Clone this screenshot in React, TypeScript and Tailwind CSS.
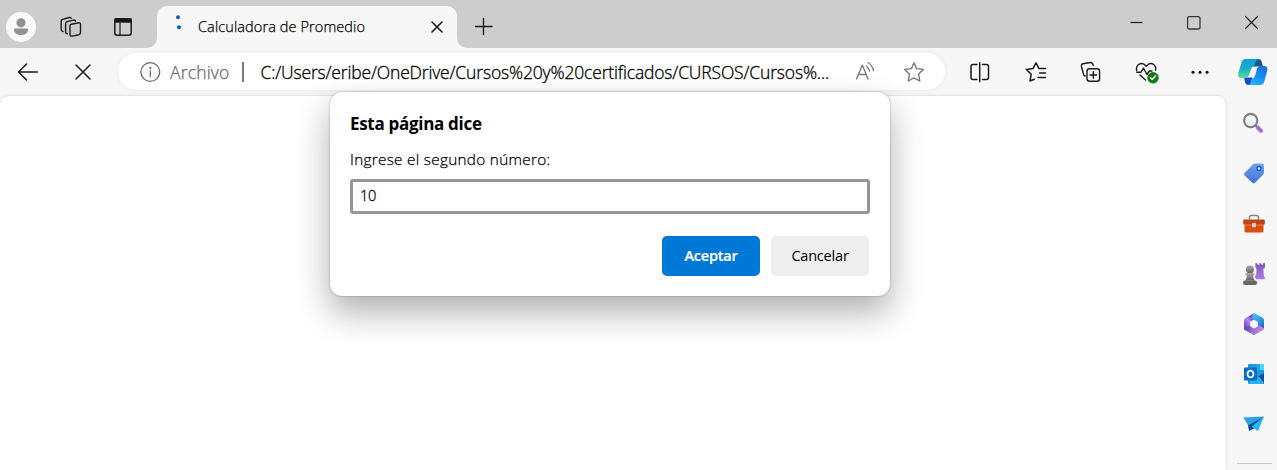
import type { ReactNode } from "react";

function Ico({ w = 24, h = 24, sw = 1.4, color = "#1b1b1b", className = "", children }: { w?: number; h?: number; sw?: number; color?: string; className?: string; children: ReactNode }) {
  return (
    <svg width={w} height={h} viewBox={`0 0 ${w} ${h}`} fill="none" stroke={color} strokeWidth={sw} strokeLinecap="round" strokeLinejoin="round" className={`shrink-0 ${className}`}>
      {children}
    </svg>
  );
}

const STAR = "M12 2.8 L14.6 8.6 L21.3 9.4 L16.6 14 L17.7 21 L12 17.9 L6.3 21 L7.4 14 L2.7 9.4 L9.4 8.6 Z";

function TabStrip() {
  return (
    <div className="flex h-12 items-end bg-[#cdcdcd]">
      <div className="ml-[6px] flex h-[42px] w-[30px] shrink-0 items-center">
        <svg width="30" height="30" viewBox="0 0 30 30">
          <circle cx="15" cy="15" r="15" fill="#f9f9f9" />
          <circle cx="15" cy="10.8" r="4.6" fill="#919191" />
          <path d="M8.8 16.500h12.4q1 0 .9 1.200Q21.500 23 15 23T7.900 17.700Q7.800 16.500 8.800 16.500Z" fill="#919191" />
        </svg>
      </div>
      <div className="ml-[23px] flex h-[42px] w-[88px] shrink-0 items-center justify-between pr-3">
        <Ico>
          <path d="M12.300 9.200 19.800 7.800Q21.500 7.600 21.500 9.200V17.300Q21.500 19.200 20 19.700L13 21.100Q11 21.300 11 19.600V11Q11 9.500 12.300 9.200Z" />
          <path d="M8.300 18.800Q6.600 18.600 6.600 17V8.500Q6.600 7 8 6.600L14.500 5.100Q16 4.900 16.500 6" />
          <path d="M4 16.500Q2.200 16.200 2.200 14.500V6Q2.200 4.700 3.600 4.300L10.200 2.500Q11.600 2.300 12.200 3.200" />
        </Ico>
        <Ico sw={1.5}>
          <rect x="3.800" y="3.800" width="16.400" height="16.400" rx="2.500" />
          <path d="M4 4h16v3H4z" fill="#111" />
          <path d="M9 8v12" strokeWidth="1.200" />
        </Ico>
      </div>
      <svg width="10" height="10" className="shrink-0"><path d="M10 0A10 10 0 0 1 0 10H10Z" fill="#f7f7f7" /></svg>
      <div className="flex h-[42px] w-[300px] shrink-0 items-center rounded-t-[10px] bg-[#f7f7f7]">
        <svg width="41" height="42" className="shrink-0">
          <circle cx="21" cy="11.300" r="2" fill="#0a62b0" />
          <circle cx="22" cy="21.300" r="2" fill="#0a62b0" />
        </svg>
        <span className="w-[232px] whitespace-nowrap text-[14.500px] font-light leading-5 tracking-[0.100px] text-black [-webkit-text-stroke:0.25px_#000]">Calculadora de Promedio</span>
        <Ico w={14} h={14} sw={1.600}><path d="M2 2 12 12M12 2 2 12" /></Ico>
      </div>
      <svg width="10" height="10" className="shrink-0"><path d="M0 0A10 10 0 0 0 10 10H0Z" fill="#f7f7f7" /></svg>
      <div className="ml-[5px] flex h-[42px] items-center">
        <Ico sw={1.400}><path d="M3.500 11.500H20M11.500 3.500V19.500" /></Ico>
      </div>
      <div className="ml-auto flex h-12 w-[151px] items-start pt-[15px]">
        <Ico w={58} h={16} sw={1.200}><path d="M4.500 7.500H16.500" strokeLinecap="butt" /></Ico>
        <Ico w={58} h={16} sw={1.300} color="#383838"><rect x="3.600" y="1.600" width="12.400" height="12.400" rx="1.500" /></Ico>
        <Ico w={34} h={16} sw={1.200}><path d="M3.500 1.500 15.500 13.500M15.500 1.500 3.500 13.500" /></Ico>
      </div>
    </div>
  );
}

function Copilot() {
  return (
    <svg width="32" height="28" viewBox="0 0 32 28" className="shrink-0">
      <defs>
        <linearGradient id="ca" x1="0.200" y1="0" x2="0.100" y2="1"><stop offset="0" stopColor="#10a0dc" /><stop offset="0.500" stopColor="#1aadc8" /><stop offset="1" stopColor="#62dca0" /></linearGradient>
        <linearGradient id="cb" x1="1" y1="0" x2="0.400" y2="1"><stop offset="0" stopColor="#2264d8" /><stop offset="0.600" stopColor="#168df5" /><stop offset="1" stopColor="#1bb2fc" /></linearGradient>
      </defs>
      <path d="M18 1h3.500q2.300 0 3 2.300L26 8.500H16.500Z" fill="#135b89" />
      <path d="M13 27h-2q-2.200-.2-2.800-2.500L7 19.500h8.300L14 25Z" fill="#1748d4" />
      <path d="M8.500 1H22q-2.800.6-3.800 3.500L17 8.500q-2.300.3-3 2.500L12 17q-1 3-4 3H4.500Q.300 20 1.200 15.500L4.500 4.500Q5.500 1 8.500 1Z" fill="url(#ca)" />
      <path d="M26.800 8q4.500 0 3.500 4.500L27.300 23.500q-1 3.500-4.500 3.500H11q2.700-.5 3.500-3.500l.8-3.200q2-.3 2.800-2.500L20 11q.9-3 3.700-3z" fill="url(#cb)" />
    </svg>
  );
}

function Toolbar() {
  return (
    <div className="flex h-12 items-center bg-[#f7f7f7] pb-px">
      <Ico className="ml-4" sw={1.600}><path d="M2.500 12H21.500M10.500 4 2.500 12l8 8" /></Ico>
      <Ico className="ml-[31px]" sw={1.500}><path d="M5 5 19 19M19 5 5 19" /></Ico>
      <div className="ml-[23px] flex h-[37px] w-[827px] shrink-0 items-center rounded-full bg-white pl-[20px] shadow-[0_0_5px_rgba(0,0,0,0.06)]">
        <Ico color="#6c6c6c" sw={1.300}>
          <circle cx="12.300" cy="12" r="9.400" /><path d="M12.300 11V16.500" /><circle cx="12.300" cy="7.800" r=".5" fill="#6c6c6c" />
        </Ico>
        <span className="ml-2 w-[72px] whitespace-nowrap text-[17.500px] font-light leading-6 tracking-[0.180px] text-[#666] [-webkit-text-stroke:0.25px_#666]">Archivo</span>
        <span className="h-5 w-[1.500px] bg-[#777]" />
        <span className="ml-[17px] w-[594px] whitespace-nowrap text-[17.500px] font-light leading-6 tracking-[-0.160px] text-black [-webkit-text-stroke:0.3px_#000]">C:/Users/eribe/OneDrive/Cursos%20y%20certificados/CURSOS/Cursos%...</span>
        <Ico color="#777" sw={1.300}>
          <path d="M1.500 19 7.300 5 13 19M3.500 14.500H11M11.500 6.200Q14 8 14.500 11.200M13 2.500Q17.500 5.500 18.500 10.500" />
        </Ico>
        <Ico className="ml-[23px]" color="#777"><path d={STAR} /></Ico>
      </div>
      <Ico className="ml-[23px]" sw={1.500}>
        <path d="M9 4.500H5q-2 0-2 2v11q0 2 2 2h4M14.500 4.500h4q2 0 2 2v11q0 2-2 2h-4" /><path d="M11.700 2.800V21.500" />
      </Ico>
      <Ico className="ml-8" sw={1.500}>
        <path d="M10.300 19.200 6 21 7.200 14.200 2.200 9.400 9 8.600 12 2.800 15 8.600H21.500M15.500 13h6M14 17.500h7.500" />
      </Ico>
      <Ico className="ml-[31px]" sw={1.400}>
        <rect x="8" y="8.800" width="12.600" height="12.400" rx="2.500" /><path d="M14.300 11.800v6.500M11 15h6.500M6.200 16Q4.500 15.500 4.300 13.500L2.500 6.500Q2 4.300 4 3.700L11.500 2.500Q13.500 2.300 14.300 5.500" />
      </Ico>
      <Ico className="ml-8" w={26} sw={1.400}>
        <path d="M1.700 10.500Q.8 6.700 3.600 4.500Q7.600 2 11.200 6.200Q15 2 18.700 4.500Q21.500 6.800 20.500 10.200M1.800 12.200H6L8.500 8.200 12 14.500 14.300 11H17M5 15 10.500 20" />
        <circle cx="18" cy="17.700" r="5.700" fill="#107c10" stroke="none" /><path d="m15.400 17.700 1.800 1.700 3.400-3.400" stroke="#fff" />
      </Ico>
      <Ico className="ml-[27px]"><g fill="#111" stroke="none"><circle cx="5" cy="12.300" r="1.500" /><circle cx="12" cy="12.300" r="1.500" /><circle cx="19" cy="12.300" r="1.500" /></g></Ico>
      <div className="ml-[25px]"><Copilot /></div>
    </div>
  );
}

function Side({ children }: { children: ReactNode }) {
  return <svg width="24" height="24" viewBox="0 0 24 24" className="shrink-0">{children}</svg>;
}

function Sidebar() {
  return (
    <aside className="flex w-[51px] shrink-0 flex-col items-center gap-[26.200px] pl-[5px] pt-[15px]">
      <Side>
        <circle cx="8.700" cy="9.500" r="6.600" fill="#f0f5f8" stroke="#808080" strokeWidth="2.200" />
        <path d="m13.500 14.300 2.200 2.200" stroke="#777" strokeWidth="2" /><path d="m15.800 16.600 3.200 3.200" stroke="#a56bd6" strokeWidth="4" strokeLinecap="round" />
      </Side>
      <Side>
        <defs><linearGradient id="tg" x1="0" y1="0" x2="0" y2="1"><stop stopColor="#6ca5f6" /><stop offset="1" stopColor="#456fd3" /></linearGradient></defs>
        <path d="M13 2.500h7q2 0 2 2v7.300q0 1-1 2L13 21.800q-1.300 1.200-2.600 0L2.500 14.500q-1-1.300 0-2.600L11 3.300Q12 2.500 13 2.500Z" fill="url(#tg)" />
        <circle cx="17" cy="7.500" r="2" fill="#e8f2ff" stroke="#2453a9" strokeWidth="1.300" />
      </Side>
      <Side>
        <g transform="translate(0 1.500)">
          <path d="M7.500 7V5q0-2 2-2h5q2 0 2 2v2" fill="none" stroke="#858585" strokeWidth="1.500" />
          <path d="M2.500 11h19v7.500q0 1.500-1.500 1.500H4q-1.500 0-1.500-1.500z" fill="#d94e16" />
          <rect x="1.200" y="7" width="21.600" height="5" rx="1" fill="#c2410f" /><path d="M2.500 12h19v1h-19z" fill="#f17b3d" /><rect x="10" y="10.300" width="4" height="4.500" rx="1" fill="#c9cdd0" />
        </g>
      </Side>
      <Side>
        <defs><linearGradient id="pg" x1="0" y1="0" x2="0" y2="1"><stop stopColor="#aaa" /><stop offset="1" stopColor="#626262" /></linearGradient><linearGradient id="rg" x1="0" y1="0" x2="0" y2="1"><stop stopColor="#8254b8" /><stop offset="1" stopColor="#ad7ce0" /></linearGradient></defs>
        <path d="M13.500 1.200h2v1.500h1.800V1.200h2v1.500h1.600V1.200H23v4.200l-1.700 1.500.6 7 .9 1v2.300H14l-1.200-3 1.400-1.500.4-5.800-1.200-1.500z" fill="url(#rg)" />
        <circle cx="8" cy="7.500" r="4" fill="url(#pg)" /><path d="M4.500 11h7q1 0 1 1.200t-1 1.300H11q.3 3.500 2.200 5H2.800Q4.700 17 5 13.500h-.5q-1 0-1-1.300t1-1.200Z" fill="url(#pg)" /><rect x="1" y="18.500" width="14" height="4.500" rx="2" fill="#666" />
      </Side>
      <Side>
        <defs>
          <linearGradient id="ma" x1="0" y1="1" x2="0.700" y2="0"><stop stopColor="#5d3bb5" /><stop offset="0.550" stopColor="#b284ee" /><stop offset="1" stopColor="#5b3fb0" /></linearGradient>
          <linearGradient id="mb" x1="0" y1="0" x2="0.600" y2="1"><stop stopColor="#4dc9ee" /><stop offset="0.600" stopColor="#2f9be4" /><stop offset="1" stopColor="#2868c4" /></linearGradient>
          <linearGradient id="mc" x1="0" y1="0" x2="1" y2="0.300"><stop stopColor="#37369a" /><stop offset="0.500" stopColor="#9a6ace" /><stop offset="1" stopColor="#c48de6" /></linearGradient>
        </defs>
        <path d="M11 1.800 3.200 6.300Q2 7.200 2 9v8L8.500 14.500V9.800L13 7V1.500Q12 1.200 11 1.800Z" fill="url(#ma)" />
        <path d="M10.500 2.300Q12 .8 14 2l7 4q1 .8 1 2.300v8.500L16 14V10.300L10.500 7Z" fill="url(#mb)" />
        <path d="M2 16.500q0 1 1.200 1.700L11 22.700q1 .6 2 0l7.800-4.500q1.200-.7 1.200-2L16.500 13 12 16 8.500 13.500Z" fill="url(#mc)" />
        <path d="m12 8 3.700 2.100v4.300L12 16.500l-3.700-2.100v-4.300z" fill="#f7f7f7" />
      </Side>
      <Side>
        <rect x="6" y="2" width="16" height="14" rx="1" fill="#189de5" /><path d="M14 2h8v6h-8z" fill="#50d3ff" /><path d="M14 2h4v6h-4z" fill="#28a8ea" /><path d="m6 12 8 4 8-5v9.500q0 1.300-1.300 1.300H6z" fill="#1490df" /><path d="m22 11-10 6 10 5z" fill="#114f96" /><path d="m6 21 11-6.500 5 6.500-1 .8H6z" fill="#24b1ef" />
        <rect x="2" y="5.500" width="13" height="13" rx="1" fill="#0a6cc8" /><ellipse cx="8.500" cy="12" rx="3" ry="3.400" fill="none" stroke="#fff" strokeWidth="1.800" />
      </Side>
      <Side>
        <path d="M1.300 5.500 22 4.500 6 13Z" fill="#2ba2e8" /><path d="M6 13 22 4.500 7 19z" fill="#0c4f95" /><path d="M7 19 11 14l4 1Z" fill="#083b76" /><path d="M22 4.500 16 19.300 9.500 14.700Z" fill="#2bb5f4" />
      </Side>
      <div className="mt-px h-px w-[35px] shrink-0 bg-[#c8c8c8]" />
    </aside>
  );
}

function PromptDialog() {
  return (
    <div role="dialog" className="absolute left-[330px] top-[92px] flex h-[204px] w-[560px] flex-col rounded-xl bg-white px-5 shadow-[0_0_2px_rgba(0,0,0,0.35),0_16px_34px_rgba(0,0,0,0.32)]">
      <h1 className="mt-5 whitespace-nowrap text-[17px] font-bold leading-6 tracking-[-0.300px] text-black">Esta página dice</h1>
      <p className="mt-[11px] whitespace-nowrap text-[15.300px] font-light leading-6 tracking-[0.300px] text-black [-webkit-text-stroke:0.25px_#000]">Ingrese el segundo número:</p>
      <div className="mt-2 flex h-[35px] shrink-0 items-center rounded-[3px] border-[3px] border-[#94969b] pb-0.5 pl-[7px] text-[14.500px] font-light tracking-[-0.300px] text-black [-webkit-text-stroke:0.3px_#000]">10</div>
      <div className="mt-[22px] flex justify-end gap-[11px] pr-px text-[14.500px] tracking-[-0.200px]">
        <button className="h-10 w-[98px] rounded-[5px] bg-[#0078d7] font-semibold text-white [-webkit-text-stroke:0.2px_#fff]">Aceptar</button>
        <button className="h-10 w-[98px] rounded-[5px] bg-[#eeeeee] font-medium text-black">Cancelar</button>
      </div>
    </div>
  );
}

export default function App() {
  return (
    <div className="relative flex h-[470px] w-[1277px] flex-col overflow-hidden bg-[#f7f7f7] font-['Open_Sans','Noto_Sans',sans-serif]">
      <TabStrip />
      <Toolbar />
      <div className="flex flex-1">
        <main className="w-[1226px] shrink-0 rounded-t-[9px] bg-white shadow-[0_0_3px_rgba(0,0,0,0.18)]" />
        <Sidebar />
      </div>
      <PromptDialog />
    </div>
  );
}
